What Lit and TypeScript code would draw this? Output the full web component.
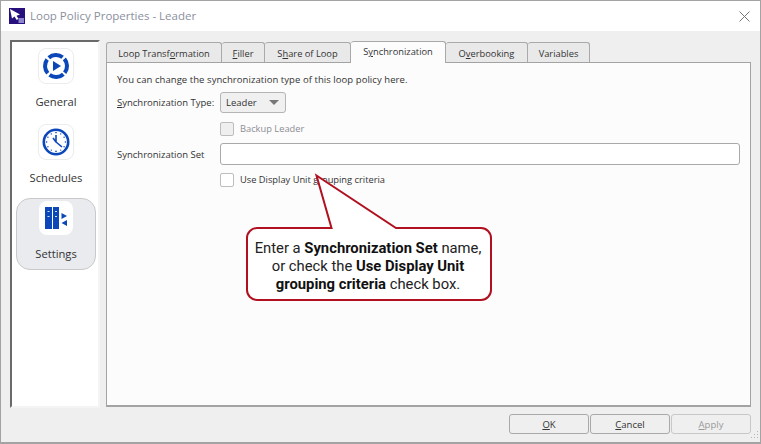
import { LitElement, html, css, svg } from "lit";
import { customElement } from "lit/decorators.js";

const generalIcon = svg`<svg width="28" height="28" viewBox="0 0 28 28">
<circle cx="14" cy="14" r="11" fill="none" stroke="#0b47b8" stroke-width="4" stroke-dasharray="14.8 2.48" transform="rotate(48 14 14)"/>
<path d="M11 9l8 5-8 5z" fill="#0b47b8"/></svg>`;

const clockIcon = svg`<svg width="28" height="28" viewBox="0 0 28 28">
<circle cx="14" cy="14" r="12.2" fill="#fff" stroke="#0b47b8" stroke-width="2.6"/>
<path d="M14 7v7l6 5M14 14l-3-4" fill="none" stroke="#0b47b8" stroke-width="1.6"/>
<g fill="#0b47b8"><circle cx="14" cy="4.6" r=".8"/><circle cx="14" cy="23.400" r=".8"/><circle cx="4.600" cy="14" r=".8"/><circle cx="23.400" cy="14" r=".8"/>
<circle cx="9.300" cy="5.900" r=".7"/><circle cx="18.700" cy="5.900" r=".7"/><circle cx="9.300" cy="22.100" r=".7"/><circle cx="18.700" cy="22.100" r=".7"/>
<circle cx="5.900" cy="9.300" r=".7"/><circle cx="22.100" cy="9.300" r=".7"/><circle cx="5.900" cy="18.700" r=".7"/><circle cx="22.100" cy="18.700" r=".7"/></g></svg>`;

const settingsIcon = svg`<svg width="22" height="22" viewBox="0 0 22 22">
<g fill="#0b47b8"><rect x="0" y="0" width="7" height="22"/><rect x="8" y="0" width="6" height="22"/>
<path d="M16.500 6l5.500 3-5.500 3zM22 13v6l-5.500-3z"/></g>
<g fill="#cfdcf5"><rect x="2.500" y="4" width="2" height="1"/><rect x="2.500" y="9" width="2" height="1"/><rect x="10" y="4" width="2" height="1"/><rect x="10" y="9" width="2" height="1"/></g></svg>`;

@customElement("app-root")
export class AppRoot extends LitElement {
  static styles = css`
    :host { display: block; width: 761px; height: 444px; font-family: "Open Sans", "Noto Sans", sans-serif; font-size: 9.5px; color: #333; }
    * { box-sizing: border-box; }
    .win { position: relative; width: 761px; height: 444px; background: #efefef; border: 1px solid #a3a3a3; border-bottom-width: 2px; display: flex; flex-direction: column; }
    .title { height: 30px; background: #fff; display: flex; align-items: center; padding: 0 10px 0 8px; gap: 5px; flex: none; }
    .title-text { font-size: 11.5px; color: #8b90a0; flex: 1; margin-top: -2px; }
    .logo { display: block; }
    .x { display: block; }
    .main { height: 377px; flex: none; display: flex; padding: 9px 0 0 9px; gap: 6px; align-items: flex-start; }
    .side { width: 90px; height: 368px; background: #fff; border: 2px solid #f4f4f4; border-left-color: #6a6a6a; border-top-color: #6a6a6a; display: flex; flex-direction: column; align-items: flex-start; padding: 3px 0 0 2px; }
    .nav { width: 80px; height: 72px; display: flex; flex-direction: column; align-items: center; font-size: 11.2px; color: #333; margin: 4px 0 0 2px; }
    .nav.sel { background: #e9ebef; border: 1px solid #c9c9c9; border-radius: 14px; margin-top: 1px; }
    .tile { width: 36px; height: 36px; background: #fff; border: 1px solid #ececec; border-radius: 8px; display: flex; align-items: center; justify-content: center; flex: none; margin: -1px 0 10px; }
    .sel .tile { width: 34px; height: 34px; border: none; margin: 2px 0 11px; }
    .content { width: 645px; display: flex; flex-direction: column; }
    .tabs { display: flex; align-items: flex-end; height: 22px; flex: none; font-size: 9.3px; }
    .tab { height: 20px; background: #e9e9e9; border: 1px solid #a9a9a9; border-bottom: none; border-left-width: 0; border-radius: 3px 3px 0 0; display: flex; align-items: center; justify-content: center; color: #333; padding-top: 1px; }
    .tab:first-child { border-left-width: 1px; }
    .tab.on { height: 22px; background: #fcfcfc; margin-bottom: -1px; position: relative; padding: 0 0 2px; }
    .panel { width: 645px; height: 345px; background: #fcfcfc; border: 1px solid #a3a3a3; border-bottom-width: 2px; padding: 10px 10px 0; display: grid; grid-template-columns: 103px 1fr; grid-auto-rows: min-content; }
    .intro { grid-column: 1 / 3; height: 19px; letter-spacing: 0.06px; }
    .lab { display: flex; align-items: center; }
    .select { width: 66px; height: 21px; background: #f0f0f0; border: 1px solid #b4b4b4; border-radius: 3px; display: flex; align-items: center; justify-content: space-between; padding: 0 6px 0 5px; }
    .caret { width: 0; height: 0; border-left: 5px solid transparent; border-right: 5px solid transparent; border-top: 5px solid #777; }
    .chk { display: flex; align-items: center; gap: 6px; height: 14px; font-size: 9.3px; }
    .chk span:last-child { margin-top: -1px; }
    .box { width: 14px; height: 14px; background: #fff; border: 1px solid #bdbdbd; border-radius: 2px; }
    .box.off { background: #efefef; }
    .muted { color: #8d8d95; }
    .r2 { margin-top: 9px; }
    .r3 { margin-top: 7px; }
    .r4 { margin-top: 8px; }
    .input { width: 520px; height: 22px; background: #fff; border: 1px solid #a9a9a9; border-radius: 3px; }
    .foot { height: 34px; flex: none; display: flex; justify-content: flex-end; padding: 6px 9px 0 0; gap: 1px; }
    .btn { width: 80px; height: 20px; background: #efefef; border: 1px solid #a9a9a9; border-radius: 3px; display: flex; align-items: center; justify-content: center; }
    .btn.dis { color: #9a9a9a; border-color: #c8c8c8; }
    .grip { position: absolute; right: 1px; bottom: 1px; display: block; }
    .callout { position: absolute; left: 243px; top: 172px; overflow: visible; display: block; }
    .note { position: absolute; left: 244px; top: 238px; width: 246px; text-align: center; font-family: Roboto, sans-serif; font-size: 14.8px; line-height: 18px; color: #222; }
    .note b { font-weight: 700; color: #111; }
  `;

  render() {
    return html`<div class="win">
      <div class="title">
        <svg class="logo" width="16" height="16" viewBox="0 0 16 16"><rect width="16" height="16" fill="#27107e"/><path d="M1 1l10 5.500-3.500 1.200 2 3-1.800 1.300-2.200-3.400L3 10.500z" fill="#fff"/><rect x="9.500" y="10" width="5.500" height="5" fill="#8f86d0"/></svg>
        <span class="title-text">Loop Policy Properties - Leader</span>
        <svg class="x" width="11" height="11" viewBox="0 0 11 11"><path d="M.5.5l10 10M10.500.5l-10 10" stroke="#777" fill="none"/></svg>
      </div>
      <div class="main">
        <div class="side">
          <div class="nav"><div class="tile">${generalIcon}</div>General</div>
          <div class="nav"><div class="tile">${clockIcon}</div>Schedules</div>
          <div class="nav sel"><div class="tile">${settingsIcon}</div>Settings</div>
        </div>
        <div class="content">
          <div class="tabs">
            <div class="tab" style="width:116px">Loop Transf<u>o</u>rmation</div>
            <div class="tab" style="width:43px"><u>F</u>iller</div>
            <div class="tab" style="width:86px">S<u>h</u>are of Loop</div>
            <div class="tab on" style="width:95px">S<u>y</u>nchronization</div>
            <div class="tab" style="width:82px">O<u>v</u>erbooking</div>
            <div class="tab" style="width:62px">Variables</div>
          </div>
          <div class="panel">
            <div class="intro">You can change the synchronization type of this loop policy here.</div>
            <div class="lab"><span><u>S</u>ynchronization Type:</span></div>
            <div class="select"><span>Leader</span><span class="caret"></span></div>
            <div class="r2"></div>
            <div class="chk r2"><span class="box off"></span><span class="muted">Backup Leader</span></div>
            <div class="lab r3">Synchronization Set</div>
            <div class="input r3"></div>
            <div class="r4"></div>
            <div class="chk r4"><span class="box"></span><span>Use Display Unit grouping criteria</span></div>
          </div>
        </div>
      </div>
      <div class="foot">
        <div class="btn"><span><u>O</u>K</span></div>
        <div class="btn"><span><u>C</u>ancel</span></div>
        <div class="btn dis"><span><u>A</u>pply</span></div>
      </div>
      <svg class="grip" width="10" height="10" viewBox="0 0 10 10"><g fill="#b5b5b5"><rect x="8" y="0" width="1" height="1"/><rect x="5" y="3" width="1" height="1"/><rect x="8" y="3" width="1" height="1"/><rect x="2" y="6" width="1" height="1"/><rect x="5" y="6" width="1" height="1"/><rect x="8" y="6" width="1" height="1"/></g></svg>
      <svg class="callout" width="250" height="130" viewBox="243 172 250 130"><path d="M256 227H330.500L315.500 174.500L395 227H480a10 10 0 0 1 10 10V289a10 10 0 0 1-10 10H256a10 10 0 0 1-10-10V237a10 10 0 0 1 10-10z" fill="#fff" stroke="#b0101f" stroke-width="2" stroke-linejoin="miter"/></svg>
      <div class="note">Enter a <b>Synchronization Set</b> name,<br>or check the <b>Use Display Unit<br>grouping criteria</b> check box.</div>
    </div>`;
  }
}
